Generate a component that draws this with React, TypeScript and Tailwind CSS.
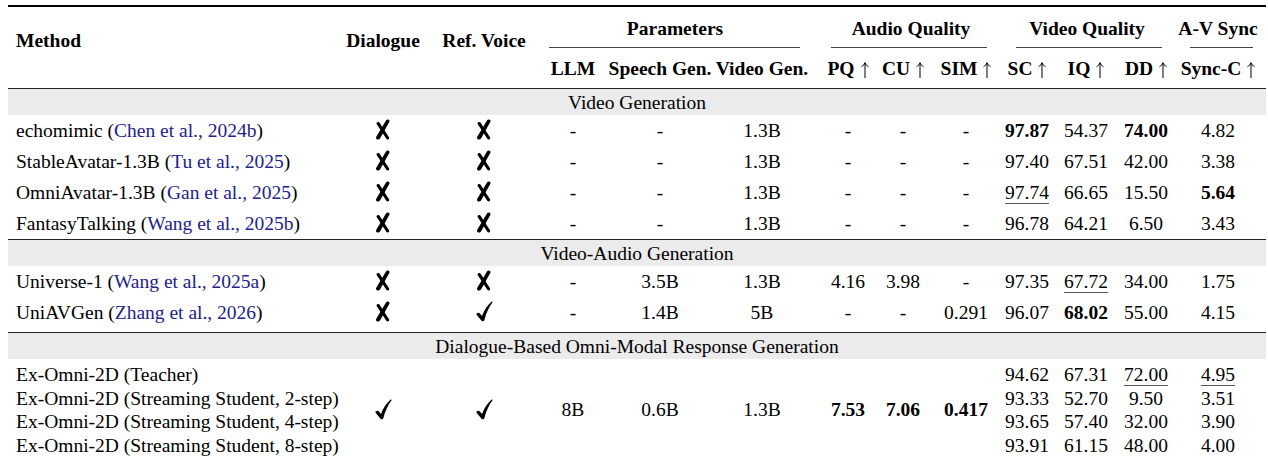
import type { ReactNode } from "react";

// column template shared by every row of the table
const cols =
    "grid grid-cols-[322px_106px_96px_82px_92px_112px_60px_50px_76px_46px_72px_48px_96px]";

type Val = { v: string; b?: boolean; u?: boolean };

function Cell({ children, className = "" }: { children?: ReactNode; className?: string }) {
    return (
        <div className={`flex items-center justify-center whitespace-nowrap ${className}`}>
            {children}
        </div>
    );
}

function Num({ v, b, u }: Val) {
    return (
        <span
            className={`${b ? "font-bold" : ""} ${u ? "underline decoration-1 decoration-[#555] underline-offset-[4px]" : ""
                }`}
        >
            {v}
        </span>
    );
}

// pifont-style ballot x (\ding{55})
function No() {
    return (
        <svg viewBox="0 0 16 21" className="w-[16px] h-[21px] -mt-[2px]" fill="currentColor">
            <path d="M12.6 0.4C14 0.2 15 1.4 14.4 2.7L5 19.6C4.3 20.7 2.8 20.9 1.8 20.2C0.9 19.6 0.8 18.4 1.4 17.4L11 1.5C11.4 0.8 11.9 0.5 12.6 0.4Z" />
            <path d="M2 3.4C2.9 2.6 4.1 2.8 4.6 3.7L14 18.2C14.5 19.1 14.1 20.1 13.1 20.4C12.3 20.6 11.6 20.2 11.2 19.5L1.8 5.3C1.4 4.6 1.5 3.9 2 3.4Z" />
        </svg>
    );
}

// pifont-style check mark (\ding{51})
function Yes() {
    return (
        <svg viewBox="0 0 17 21" className="w-[17px] h-[21px] -mt-[2px]" fill="currentColor">
            <path d="M0.6 12.6C1.5 11.4 3 11.3 3.9 12.4L6 15C8.3 9.3 11.3 4.5 15.4 0.8C16 0.3 16.8 0.9 16.4 1.6C13 6.2 10.3 11.6 8.4 18.9C8 20.3 6.2 20.6 5.3 19.5L0.8 14C0.4 13.5 0.3 13 0.6 12.6Z" />
        </svg>
    );
}

function Arrow() {
    return (
        <svg
            viewBox="0 0 8 16"
            className="inline-block w-[8px] h-[16px] ml-[6px] align-[-3px]"
            fill="none"
            stroke="currentColor"
            strokeWidth="1"
        >
            <path d="M4 16V1" />
            <path d="M0.5 4.8C2 3.9 3.3 2.5 4 0.6C4.7 2.5 6 3.9 7.5 4.8" />
        </svg>
    );
}

function Cite({ name, cite }: { name: string; cite: string }) {
    return (
        <>
            {name} (<span className="text-[#22228c]">{cite}</span>)
        </>
    );
}

function Band({ label }: { label: string }) {
    return (
        <div className="h-[26px] bg-[#ebebeb] flex items-center justify-center pt-px">{label}</div>
    );
}

const Rule = () => <div className="h-px bg-[#222]" />;

type Row = {
    method: ReactNode;
    dlg: boolean;
    ref: boolean;
    vals: Val[];
};

const videoRows: Row[] = [
    {
        method: <Cite name="echomimic" cite="Chen et al., 2024b" />,
        dlg: false,
        ref: false,
        vals: [{ v: "-" }, { v: "-" }, { v: "1.3B" }, { v: "-" }, { v: "-" }, { v: "-" }, { v: "97.87", b: true }, { v: "54.37" }, { v: "74.00", b: true }, { v: "4.82" }],
    },
    {
        method: <Cite name="StableAvatar-1.3B" cite="Tu et al., 2025" />,
        dlg: false,
        ref: false,
        vals: [{ v: "-" }, { v: "-" }, { v: "1.3B" }, { v: "-" }, { v: "-" }, { v: "-" }, { v: "97.40" }, { v: "67.51" }, { v: "42.00" }, { v: "3.38" }],
    },
    {
        method: <Cite name="OmniAvatar-1.3B" cite="Gan et al., 2025" />,
        dlg: false,
        ref: false,
        vals: [{ v: "-" }, { v: "-" }, { v: "1.3B" }, { v: "-" }, { v: "-" }, { v: "-" }, { v: "97.74", u: true }, { v: "66.65" }, { v: "15.50" }, { v: "5.64", b: true }],
    },
    {
        method: <Cite name="FantasyTalking" cite="Wang et al., 2025b" />,
        dlg: false,
        ref: false,
        vals: [{ v: "-" }, { v: "-" }, { v: "1.3B" }, { v: "-" }, { v: "-" }, { v: "-" }, { v: "96.78" }, { v: "64.21" }, { v: "6.50" }, { v: "3.43" }],
    },
];

const avRows: Row[] = [
    {
        method: <Cite name="Universe-1" cite="Wang et al., 2025a" />,
        dlg: false,
        ref: false,
        vals: [{ v: "-" }, { v: "3.5B" }, { v: "1.3B" }, { v: "4.16" }, { v: "3.98" }, { v: "-" }, { v: "97.35" }, { v: "67.72", u: true }, { v: "34.00" }, { v: "1.75" }],
    },
    {
        method: <Cite name="UniAVGen" cite="Zhang et al., 2026" />,
        dlg: false,
        ref: true,
        vals: [{ v: "-" }, { v: "1.4B" }, { v: "5B" }, { v: "-" }, { v: "-" }, { v: "0.291" }, { v: "96.07" }, { v: "68.02", b: true }, { v: "55.00" }, { v: "4.15" }],
    },
];

const omniRows: { name: string; vals: Val[] }[] = [
    { name: "Ex-Omni-2D (Teacher)", vals: [{ v: "94.62" }, { v: "67.31" }, { v: "72.00", u: true }, { v: "4.95", u: true }] },
    { name: "Ex-Omni-2D (Streaming Student, 2-step)", vals: [{ v: "93.33" }, { v: "52.70" }, { v: "9.50" }, { v: "3.51" }] },
    { name: "Ex-Omni-2D (Streaming Student, 4-step)", vals: [{ v: "93.65" }, { v: "57.40" }, { v: "32.00" }, { v: "3.90" }] },
    { name: "Ex-Omni-2D (Streaming Student, 8-step)", vals: [{ v: "93.91" }, { v: "61.15" }, { v: "48.00" }, { v: "4.00" }] },
];

const omniShared: ReactNode[] = [
    <Yes />,
    <Yes />,
    "8B",
    "0.6B",
    "1.3B",
    <Num v="7.53" b />,
    <Num v="7.06" b />,
    <Num v="0.417" b />,
];

function DataRow({ row }: { row: Row }) {
    return (
        <div className={`${cols} h-[31px]`}>
            <div className="flex items-center pl-2 whitespace-nowrap">{row.method}</div>
            <Cell>{row.dlg ? <Yes /> : <No />}</Cell>
            <Cell>{row.ref ? <Yes /> : <No />}</Cell>
            {row.vals.map((val, i) => (
                <Cell key={i}>
                    <Num {...val} />
                </Cell>
            ))}
        </div>
    );
}

function Group({ label, trim }: { label: string; trim: string }) {
    return (
        <div className="flex flex-col pt-[11px]">
            <div className="text-center leading-[22px] whitespace-nowrap">{label}</div>
            <div className={`mt-[7px] h-px bg-[#444] ${trim}`} />
        </div>
    );
}

export default function App() {
    const sub = ["LLM", "Speech Gen.", "Video Gen."];
    const metrics = ["PQ", "CU", "SIM", "SC", "IQ", "DD", "Sync-C"];

    return (
        <div className="w-[1268px] h-[465px] overflow-hidden bg-white text-black font-[family-name:'Liberation_Serif','Times_New_Roman',serif] text-[19.5px] pt-[5px] pl-[8px]">
            <div className="w-[1258px]">
                <div className="h-[2px] bg-black" />

                {/* header */}
                <div className={`${cols} grid-rows-[41px_40px] font-bold`}>
                    <div className="row-span-2 pl-2 pt-[23px] leading-[22px]">Method</div>
                    <div className="row-span-2 pt-[23px] leading-[22px] text-center">Dialogue</div>
                    <div className="row-span-2 pt-[23px] leading-[22px] text-center">Ref. Voice</div>
                    <div className="col-span-3">
                        <Group label="Parameters" trim="ml-[17px] mr-[18px]" />
                    </div>
                    <div className="col-span-3">
                        <Group label="Audio Quality" trim="ml-[13px] mr-[17px]" />
                    </div>
                    <div className="col-span-3">
                        <Group label="Video Quality" trim="ml-[12px] mr-[8px]" />
                    </div>
                    <div>
                        <Group label="A-V Sync" trim="ml-[20px] mr-[13px]" />
                    </div>
                    {sub.map((s) => (
                        <Cell key={s} className="items-start pt-[10px] leading-[22px]">
                            {s}
                        </Cell>
                    ))}
                    {metrics.map((m) => (
                        <Cell key={m} className="items-start pt-[10px] leading-[22px]">
                            <span>
                                {m}
                                <Arrow />
                            </span>
                        </Cell>
                    ))}
                </div>

                <Rule />
                <Band label="Video Generation" />
                {videoRows.map((r, i) => (
                    <DataRow key={i} row={r} />
                ))}

                <Rule />
                <Band label="Video-Audio Generation" />
                <div className="pb-[4px]">
                    {avRows.map((r, i) => (
                        <DataRow key={i} row={r} />
                    ))}
                </div>

                <Rule />
                <Band label="Dialogue-Based Omni-Modal Response Generation" />
                <div className={`${cols} grid-rows-[23.5px_23.5px_23.5px_23.5px] pt-[4px]`}>
                    {omniRows.flatMap((r, i) => [
                        <div key={`m${i}`} className="flex items-center pl-2 whitespace-nowrap">
                            {r.name}
                        </div>,
                        ...(i === 0
                            ? omniShared.map((s, j) => (
                                <Cell key={`s${j}`} className="row-span-4">
                                    {s}
                                </Cell>
                            ))
                            : []),
                        ...r.vals.map((val, j) => (
                            <Cell key={`v${i}${j}`}>
                                <Num {...val} />
                            </Cell>
                        )),
                    ])}
                </div>
            </div>
        </div>
    );
}
